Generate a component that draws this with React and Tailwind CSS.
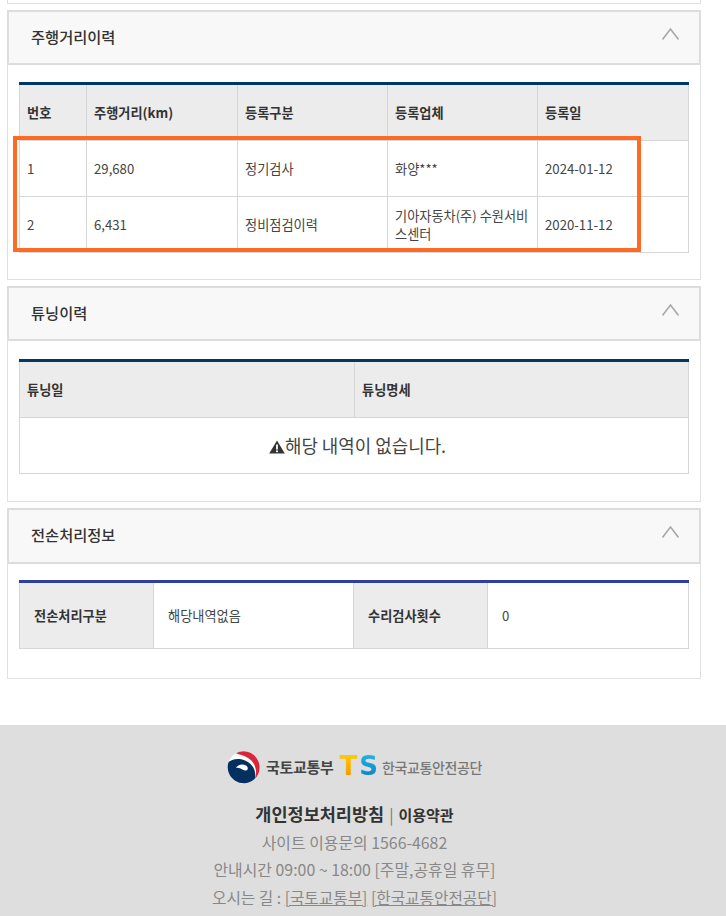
const FONT = "font-['Noto_Sans_CJK_KR','Noto_Sans',sans-serif]";

const Chevron = () => (
  <svg width="17" height="13" viewBox="0 0 17 13" className="mt-[-9px]" fill="none">
    <path d="M0.5 12.5 L8.5 2 L16.5 12.5" stroke="#a8a8a8" strokeWidth="1.6" />
  </svg>
);

const Panel = ({ title, head = "h-[55px]", top = "pt-[17px]", bottom = "pb-[26px]", lift = "mb-[2px]", children }) => (
  <section className={`border border-[#e0e0e0] bg-white ${bottom}`}>
    <div className={`flex ${head} items-center justify-between border-2 border-[#dddddd] bg-[#f8f8f8] mx-[-1px] mt-[-1px] pl-[22px] pr-[20px]`}>
      <h3 className={`${lift} text-[15.3px] font-medium text-[#333]`}>{title}</h3>
      <Chevron />
    </div>
    <div className={`${top} pl-[11px]`}>{children}</div>
  </section>
);

const Th = ({ children, className = "" }) => (
  <th className={`border border-[#d6d6d6] border-t-0 bg-[#ececec] pl-[7px] text-left text-[13.2px] font-bold text-[#333] ${className}`}>{children}</th>
);

const Td = ({ children }) => (
  <td className="border border-[#d6d6d6] px-[7px] text-[13.2px] leading-[18px] text-[#444]">{children}</td>
);

const mileage = [
  { no: 1, km: "29,680", kind: "정기검사", shop: "화양***", date: "2024-01-12" },
  { no: 2, km: "6,431", kind: "정비점검이력", shop: "기아자동차(주) 수원서비스센터", date: "2020-11-12" },
];

const WarnIcon = () => (
  <svg width="16" height="14" viewBox="0 0 16 14" className="inline-block align-[-1px]">
    <path d="M8 0.5 L15.8 13.6 H0.2 Z" fill="#333" />
    <rect x="7.1" y="4.5" width="1.8" height="5" fill="#fff" />
    <rect x="7.1" y="10.4" width="1.8" height="1.8" fill="#fff" />
  </svg>
);

const Taegeuk = () => (
  <svg width="33" height="33" viewBox="0 0 33 33">
    <circle cx="16.5" cy="16.5" r="16" fill="#fff" />
    <path d="M1.6 11 A16 16 0 0 0 27.8 27.8 C30 20 25 12 18 9.5 C11 7 6 8 1.6 11 Z" fill="#04305f" />
    <path d="M9 17 C10.5 13.5 15.5 12.5 19 14.5 C22 16.5 21 20 18 19.5 C15 19 13 15.5 9 17 Z" fill="#fff" />
    <path d="M9 2.3 A16 16 0 0 1 27.8 27.8 C31 20 28 11 21 7 C17 4.5 12 3.5 9 2.3 Z" fill="#d9263c" />
  </svg>
);

const App = () => (
  <div className={`${FONT} h-[916px] w-[726px] overflow-hidden bg-white`}>
    <div className="w-[694px] ml-[7px] flex flex-col gap-[6px]">
      <div className="h-[4px] border-x border-b border-[#e0e0e0]" />

      <Panel title="주행거리이력">
        <table className="w-[669px] table-fixed border-collapse border-t-[3px] border-t-[#003764]">
          <colgroup>
            <col className="w-[67px]" />
            <col className="w-[151px]" />
            <col className="w-[150px]" />
            <col className="w-[150px]" />
            <col className="w-[151px]" />
          </colgroup>
          <thead>
            <tr className="h-[57px]">
              <Th>번호</Th>
              <Th>주행거리(km)</Th>
              <Th>등록구분</Th>
              <Th>등록업체</Th>
              <Th>등록일</Th>
            </tr>
          </thead>
          <tbody>
            {mileage.map((r) => (
              <tr key={r.no} className="h-[56px]">
                <Td>{r.no}</Td>
                <Td>{r.km}</Td>
                <Td>{r.kind}</Td>
                <Td>{r.shop}</Td>
                <Td>{r.date}</Td>
              </tr>
            ))}
          </tbody>
        </table>
      </Panel>

      <Panel title="튜닝이력" top="pt-[18px]" bottom="pb-[27px]">
        <table className="w-[669px] table-fixed border-collapse border-t-[3px] border-t-[#003764]">
          <colgroup>
            <col className="w-[335px]" />
            <col className="w-[334px]" />
          </colgroup>
          <thead>
            <tr className="h-[57px]">
              <Th>튜닝일</Th>
              <Th>튜닝명세</Th>
            </tr>
          </thead>
          <tbody>
            <tr className="h-[56px]">
              <td colSpan={2} className="border border-[#d6d6d6] pl-[7px] text-center text-[17.9px] text-[#444]">
                <WarnIcon />
                해당 내역이 없습니다.
              </td>
            </tr>
          </tbody>
        </table>
      </Panel>

      <Panel title="전손처리정보" head="h-[56px]" top="pt-[16px]" bottom="pb-[29px]" lift="mb-[4px]">
        <table className="w-[669px] table-fixed border-collapse border-t-[3px] border-t-[#2f3f9e]">
          <colgroup>
            <col className="w-[134px]" />
            <col className="w-[200px]" />
            <col className="w-[134px]" />
            <col className="w-[201px]" />
          </colgroup>
          <tbody>
            <tr className="h-[67px]">
              <th className="border border-[#d6d6d6] border-t-0 bg-[#ececec] pl-[14px] text-left text-[13.2px] font-bold text-[#333]">전손처리구분</th>
              <td className="border border-[#d6d6d6] border-t-0 pl-[14px] text-[13.2px] text-[#444]">해당내역없음</td>
              <th className="border border-[#d6d6d6] border-t-0 bg-[#ececec] pl-[14px] text-left text-[13.2px] font-bold text-[#333]">수리검사횟수</th>
              <td className="border border-[#d6d6d6] border-t-0 pl-[14px] text-[13.2px] text-[#444]">0</td>
            </tr>
          </tbody>
        </table>
      </Panel>
    </div>

    {/* footer */}
    <footer className="mt-[46px] h-[191px] bg-[#dedede] pt-[26px] pr-[17px] text-center">
      <div className="flex h-[33px] items-center justify-center">
        <Taegeuk />
        <span className="ml-[6px] text-[15px] font-bold tracking-[-0.3px] text-[#444]">국토교통부</span>
        <span className="ml-[6px] mt-[-3px] pr-[2px] bg-[linear-gradient(180deg,#ffd000_0%,#f39200_100%)] bg-clip-text font-['DejaVu_Sans',sans-serif] text-[26px] leading-[26px] font-bold text-transparent">T</span>
        <span className="mt-[-3px] bg-[linear-gradient(180deg,#23b5ec_0%,#0a7fc4_100%)] bg-clip-text font-['DejaVu_Sans',sans-serif] text-[26px] leading-[26px] font-bold text-transparent">S</span>
        <span className="ml-[4px] text-[14px] font-medium tracking-[-0.35px] text-[#777]">한국교통안전공단</span>
      </div>
      <div className="mt-[16px] flex flex-col text-[15.9px] leading-[27.5px] text-[#888]">
        <p>
          <a className="text-[17.5px] font-bold text-[#333]">개인정보처리방침</a>
          <span className="mx-[5px] text-[#777]">|</span>
          <a className="text-[15px] font-bold text-[#333]">이용약관</a>
        </p>
        <p>사이트 이용문의 1566-4682</p>
        <p>안내시간 09:00 ~ 18:00 [주말,공휴일 휴무]</p>
        <p className="text-[15.7px]">
          오시는 길 : <a className="underline">[국토교통부]</a> <a className="underline">[한국교통안전공단]</a>
        </p>
      </div>
    </footer>

    {/* annotation box */}
    <div className="absolute left-[13px] top-[136px] h-[116px] w-[628px] border-4 border-[#ff6a27]" />
  </div>
);

export default App;
